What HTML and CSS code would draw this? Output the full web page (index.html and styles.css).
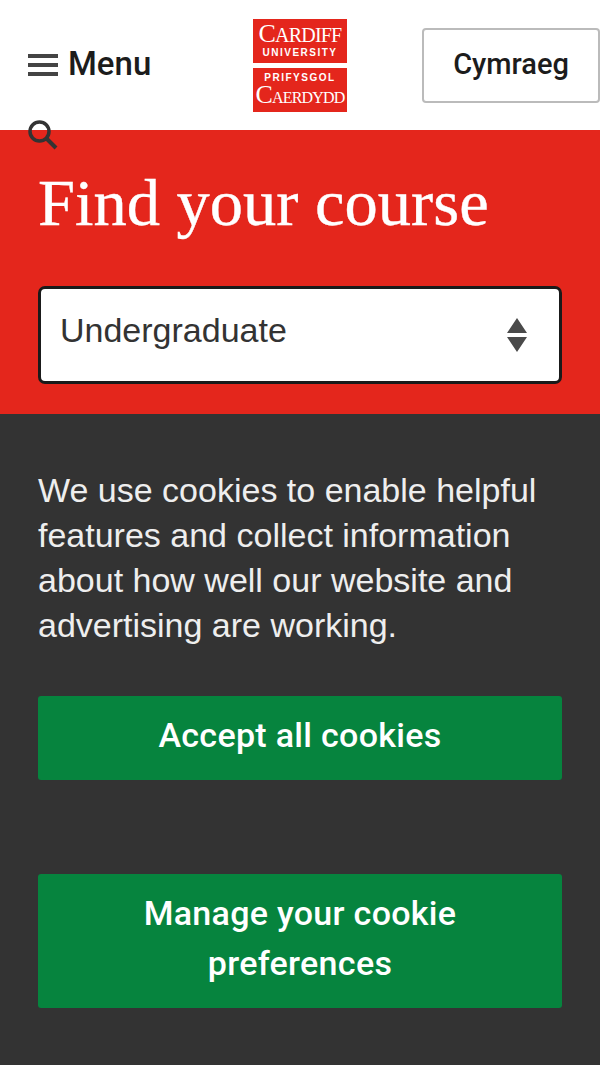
FILE: index.html
```html
<!DOCTYPE html>
<html lang="en">
<head>
<meta charset="utf-8">
<title>Find your course</title>
<link rel="stylesheet" href="styles.css">
</head>
<body>
<header class="site-header">
  <a class="menu-link">
    <svg class="menu-icon" viewBox="0 0 30 22" width="30" height="22"><path d="M0 0h30v4H0zM0 9h30v4H0zM0 18h30v4H0z"/></svg>
    <span>Menu</span>
  </a>
  <div class="logo">
    <div class="logo-block">
      <span class="logo-big"><span class="cap">C</span>ARDIFF</span>
      <span class="logo-small">UNIVERSITY</span>
    </div>
    <div class="logo-block">
      <span class="logo-small">PRIFYSGOL</span>
      <span class="logo-big logo-long"><span class="cap">C</span>AERDYDD</span>
    </div>
  </div>
  <a class="lang-button">Cymraeg</a>
  <svg class="search-icon" viewBox="0 0 32 32" width="32" height="32"><circle cx="12.5" cy="12.500" r="9.500" fill="none" stroke="#333" stroke-width="3.500"/><path d="M19.500 19.500L29 29" stroke="#333" stroke-width="4" fill="none"/></svg>
</header>
<section class="hero">
  <h1>Find your course</h1>
  <div class="select">
    <span>Undergraduate</span>
    <svg class="select-arrows" viewBox="0 0 22 34" width="22" height="34"><path d="M11 0l10 15H1zM1 19h20L11 34z"/></svg>
  </div>
</section>
<section class="cookies">
  <p>We use cookies to enable helpful features and collect information about how well our website and advertising are working.</p>
  <a class="cookie-button accept">Accept all cookies</a>
  <a class="cookie-button manage">Manage your cookie preferences</a>
</section>
</body>
</html>
```
FILE: styles.css
```css
* { box-sizing: border-box; }
html, body { margin: 0; padding: 0; }
body { width: 600px; height: 1065px; overflow: hidden; background: #333; font-family: "Liberation Sans", Arial, sans-serif; }
.site-header { position: relative; height: 130px; background: #fff; display: grid; grid-template-columns: 1fr 94px 1fr; align-items: start; }
.menu-link { display: flex; align-items: center; gap: 10px; padding: 45px 0 0 28px; font-family: Roboto, sans-serif; font-size: 33px; line-height: 38px; font-weight: 500; color: #1c1c1c; }
.menu-icon { fill: #444; margin-top: 2px; }
.logo { padding-top: 19px; display: flex; flex-direction: column; gap: 5px; }
.logo-block { height: 44px; background: #e4261c; color: #fff; display: flex; flex-direction: column; align-items: center; justify-content: center; font-family: "Liberation Serif", serif; overflow: hidden; }
.logo-big { font-size: 20px; line-height: 22px; letter-spacing: -0.8px; }
.logo-long { font-size: 16px; letter-spacing: -0.8px; }
.logo-big .cap { font-size: 26px; }
.logo-small { font-family: "Liberation Sans", sans-serif; font-size: 10px; line-height: 13px; letter-spacing: 1.5px; font-weight: 700; }
.lang-button { justify-self: end; margin-top: 28px; width: 178px; height: 75px; border: 2px solid #bbb; border-radius: 4px; display: flex; align-items: center; justify-content: center; padding-bottom: 3px; font-family: Roboto, sans-serif; font-size: 29px; font-weight: 500; color: #1c1c1c; }
.search-icon { position: absolute; left: 27px; top: 119px; }
.hero { height: 284px; background: #e4261c; padding: 38px 38px 0; }
h1 { margin: 0; font-family: "Liberation Serif", serif; font-weight: 400; font-size: 66.5px; line-height: 70px; color: #fff; -webkit-text-stroke: 0.4px #fff; }
.select { margin-top: 48px; height: 98px; background: #fff; border: 3px solid #1a1a1a; border-radius: 7px; display: flex; align-items: center; justify-content: space-between; padding: 0 31px 10px 19px; font-size: 34px; color: #333; }
.select-arrows { fill: #4a4a4a; margin-top: 10px; }
.cookies { padding: 54px 38px 0; color: #eee; }
.cookies p { margin: 0 0 48px; font-size: 34px; line-height: 45px; }
.cookie-button { display: flex; align-items: center; justify-content: center; text-align: center; background: #06843e; color: #fff; border-radius: 3px; font-family: Roboto, sans-serif; font-size: 34px; letter-spacing: 0.3px; line-height: 50px; font-weight: 500; padding: 10px 70px 16px; }
.accept { height: 84px; margin-bottom: 94px; }
.manage { height: 134px; }
```
